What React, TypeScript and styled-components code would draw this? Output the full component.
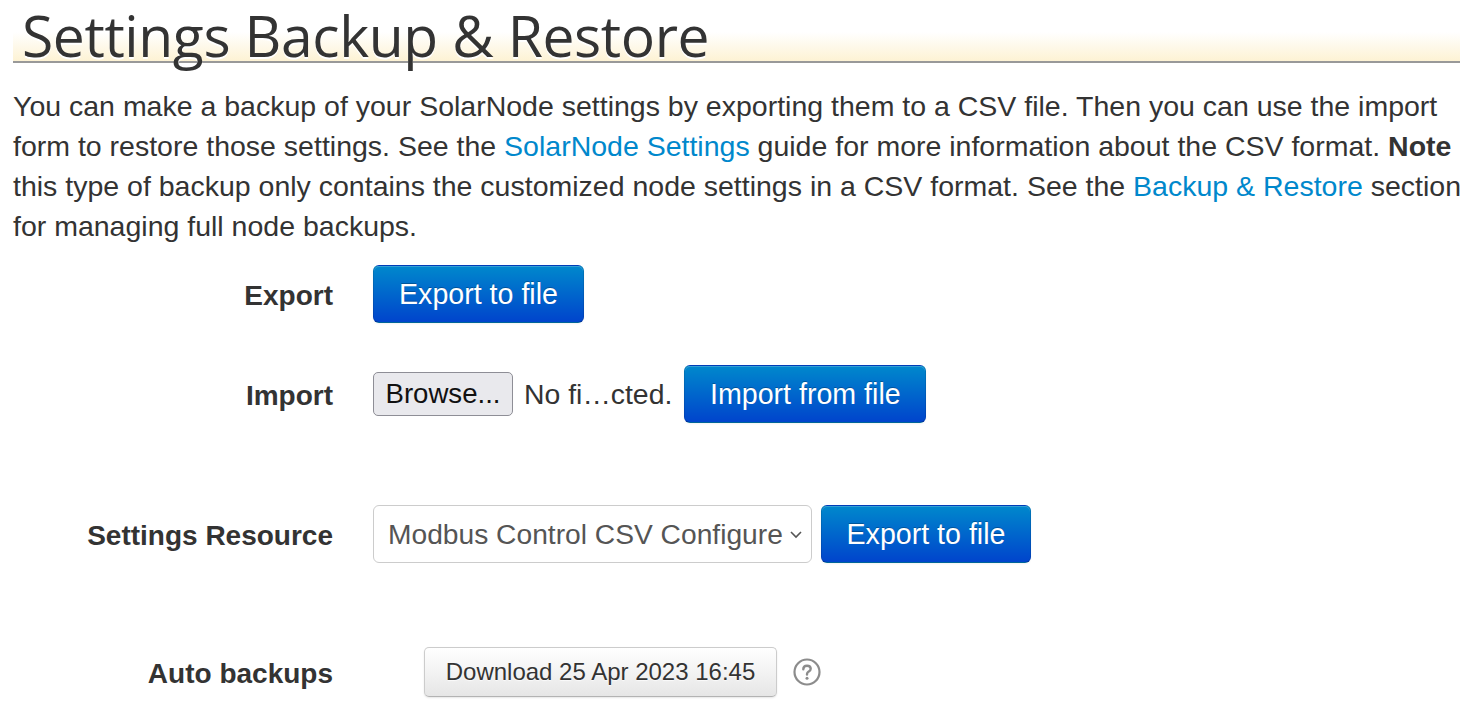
import React from "react";
import styled, { createGlobalStyle } from "styled-components";

const Global = createGlobalStyle`
  html, body { margin: 0; padding: 0; background: #fff; }
  body {
    font-family: "Liberation Sans", Arial, sans-serif;
    font-size: 28px;
    line-height: 40px;
    color: #333;
  }
`;

const Page = styled.div`
  padding: 0 24px 0 13px;
`;

const Heading = styled.h1`
  margin: 0 0 23px 0;
  padding: 0 0 0 9px;
  height: 63px;
  box-sizing: border-box;
  font-family: "Open Sans", "Noto Sans", sans-serif;
  font-weight: 400;
  font-size: 57px;
  line-height: 70px;
  letter-spacing: -0.4px;
  color: #333;
  text-shadow: 0 2px 0 #fff;
  border-bottom: 2px solid #999;
  background: linear-gradient(to bottom, #fff 0px, #fff 32px, #fdf2d2 62px);
  white-space: nowrap;
`;

const Intro = styled.p`
  margin: 0 -16px 19px 0;
  font-size: 28.5px;
  line-height: 40px;
  white-space: nowrap;
`;

const Link = styled.a`
  color: #0088cc;
  text-decoration: none;
`;

const Form = styled.div`
  display: flex;
  flex-direction: column;
`;

const Group = styled.div<{ $mb: number }>`
  display: flex;
  align-items: center;
  margin-bottom: ${(p) => p.$mb}px;
`;

const Label = styled.div`
  width: 320px;
  flex: none;
  text-align: right;
  font-weight: 700;
  font-size: 28px;
  color: #333;
  padding-top: 3px;
`;

const Controls = styled.div<{ $indent?: number }>`
  margin-left: ${(p) => 40 + (p.$indent || 0)}px;
  display: flex;
  align-items: center;
`;

const PrimaryButton = styled.button<{ $w: number }>`
  width: ${(p) => p.$w}px;
  height: 58px;
  box-sizing: border-box;
  border: 1px solid #0044aa;
  border-color: rgba(0, 0, 0, 0.1) rgba(0, 0, 0, 0.1) rgba(0, 0, 0, 0.25);
  border-radius: 6px;
  background: linear-gradient(to bottom, #0088cc, #0044cc);
  color: #fff;
  font-family: "Liberation Sans", Arial, sans-serif;
  font-size: 28.6px;
  text-shadow: 0 -1px 0 rgba(0, 0, 0, 0.25);
  box-shadow: inset 0 1px 0 rgba(255, 255, 255, 0.2), 0 1px 2px rgba(0, 0, 0, 0.05);
  padding: 0;
  cursor: pointer;
`;

const BrowseButton = styled.button`
  width: 140px;
  height: 44px;
  box-sizing: border-box;
  border: 1.5px solid #8e8e96;
  border-radius: 5px;
  background: #e9e9ed;
  color: #111;
  font-family: "Liberation Sans", Arial, sans-serif;
  font-size: 27.6px;
  padding: 0;
`;

const FileName = styled.span`
  margin: 0 12px 0 11px;
  font-size: 28.4px;
  color: #333;
`;

const Select = styled.div`
  width: 439px;
  height: 58px;
  box-sizing: border-box;
  border: 1.5px solid #ccc;
  border-radius: 6px;
  background: #fff;
  display: flex;
  align-items: center;
  padding: 0 8px 0 14px;
  color: #555;
  font-size: 28.2px;
  margin-right: 9px;
  white-space: nowrap;
`;

const SelectText = styled.span`
  flex: 1;
  white-space: nowrap;
`;

const DefaultButton = styled.button`
  width: 353px;
  height: 50px;
  box-sizing: border-box;
  border: 1px solid #ccc;
  border-bottom-color: #b3b3b3;
  border-radius: 5px;
  background: linear-gradient(to bottom, #ffffff, #e6e6e6);
  box-shadow: inset 0 1px 0 rgba(255, 255, 255, 0.2), 0 1px 2px rgba(0, 0, 0, 0.1);
  color: #333;
  font-family: "Liberation Sans", Arial, sans-serif;
  font-size: 24px;
  text-shadow: 0 1px 1px rgba(255, 255, 255, 0.75);
  padding: 0;
`;

const Help = styled.span`
  margin-left: 15px;
  display: inline-flex;
`;

export default function App() {
  return (
    <Page>
      <Global />
      <Heading>Settings Backup &amp; Restore</Heading>
      <Intro>
        You can make a backup of your SolarNode settings by exporting them to a CSV file. Then you can use the import
        <br />
        form to restore those settings. See the <Link href="#">SolarNode Settings</Link> guide for more information
        about the CSV format. <strong>Note</strong>
        <br />
        this type of backup only contains the customized node settings in a CSV format. See the{" "}
        <Link href="#">Backup &amp; Restore</Link> section
        <br />
        for managing full node backups.
      </Intro>
      <Form>
        <Group $mb={42}>
          <Label>Export</Label>
          <Controls>
            <PrimaryButton $w={211}>Export to file</PrimaryButton>
          </Controls>
        </Group>
        <Group $mb={82}>
          <Label>Import</Label>
          <Controls>
            <BrowseButton>Browse...</BrowseButton>
            <FileName>No fi…cted.</FileName>
            <PrimaryButton $w={242}>Import from file</PrimaryButton>
          </Controls>
        </Group>
        <Group $mb={84}>
          <Label>Settings Resource</Label>
          <Controls>
            <Select>
              <SelectText>Modbus Control CSV Configure</SelectText>
              <svg width="14" height="10" viewBox="0 0 14 10">
                <path d="M2 3 L7 8 L12 3" fill="none" stroke="#555" strokeWidth="1.6" />
              </svg>
            </Select>
            <PrimaryButton $w={210}>Export to file</PrimaryButton>
          </Controls>
        </Group>
        <Group $mb={10}>
          <Label>Auto backups</Label>
          <Controls $indent={51}>
            <DefaultButton>Download 25 Apr 2023 16:45</DefaultButton>
            <Help>
              <svg width="30" height="30" viewBox="0 0 30 30">
                <circle cx="15" cy="15" r="12.5" fill="none" stroke="#8c8c8c" strokeWidth="2.2" />
                <path
                  d="M11.3 12.2 C11.3 9.9 13 8.7 15 8.7 C17.1 8.7 18.7 9.9 18.7 11.8 C18.7 13.9 16.9 14.3 15.9 15.2 C15.2 15.8 15 16.4 15 17.6"
                  fill="none"
                  stroke="#8c8c8c"
                  strokeWidth="2.4"
                  strokeLinecap="round"
                />
                <circle cx="15" cy="21.3" r="1.5" fill="#8c8c8c" />
              </svg>
            </Help>
          </Controls>
        </Group>
      </Form>
    </Page>
  );
}
